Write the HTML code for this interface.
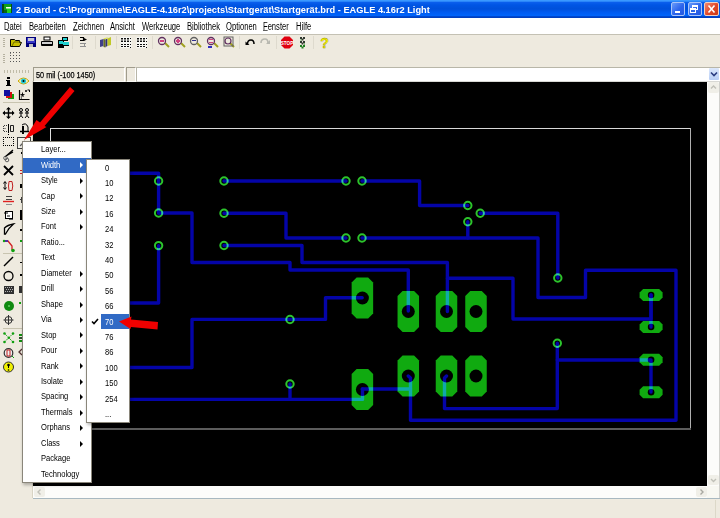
<!DOCTYPE html>
<html><head><meta charset="utf-8">
<style>
*{margin:0;padding:0;box-sizing:border-box}
html,body{width:720px;height:518px;overflow:hidden;background:#EEEADF;font-family:"Liberation Sans",sans-serif;position:relative}
.a{position:absolute}
.t{position:absolute;white-space:nowrap;transform-origin:0 0;line-height:1}
#title{left:0;top:0;width:720px;height:18px;background:linear-gradient(#3a98ff 0,#3a98ff 1px,#0a5eec 2.5px,#0055e4 5px,#0050da 9px,#005af0 12px,#0064fa 15.5px,#0048d0 16.5px,#003cb8 18px)}
#menubar{left:0;top:18px;width:720px;height:17px;background:#fff;border-bottom:1px solid #c4c1b4}
.mi{position:absolute;top:20.5px;font-size:10px;color:#000;transform:scaleX(.76);transform-origin:0 0;white-space:nowrap}
.mi u{text-decoration:underline;text-decoration-color:#606060;text-underline-offset:0px;text-decoration-thickness:1px}
#canvas{left:33px;top:82px;width:674px;height:404px;background:#000}
.menu{background:#fff;border:1px solid #8a867a}
.it{position:absolute;font-size:9px;transform:scaleX(.84);transform-origin:0 0;white-space:nowrap;color:#000}
.arr{position:absolute;width:0;height:0;border-top:3px solid transparent;border-bottom:3px solid transparent;border-left:3px solid #000}
</style></head><body>
<!-- title bar -->
<div id="title" class="a"></div>
<svg class="a" style="left:2px;top:4px" width="10" height="9"><rect width="10" height="9" fill="#10a018"/><rect x="0" y="0" width="2" height="9" fill="#084810"/><rect x="9" y="0" width="1" height="9" fill="#085010"/><rect x="2" y="6" width="3" height="3" fill="#086a10"/><rect x="5" y="3" width="4" height="6" fill="#20d020"/><rect x="4" y="3" width="5" height="1.5" fill="#f0fff0"/></svg>
<div class="t" style="left:16px;top:6px;font-size:9.3px;font-weight:bold;color:#fff;transform:scaleX(.995)">2 Board - C:\Programme\EAGLE-4.16r2\projects\Startgerät\Startgerät.brd - EAGLE 4.16r2 Light</div>
<!-- window buttons -->
<div class="a" style="left:671px;top:2px;width:14px;height:14px;border:1px solid #a8c4f8;border-radius:2px;background:linear-gradient(135deg,#6a9cfa,#2c64ec 55%,#2458e0)"></div>
<div class="a" style="left:675px;top:11px;width:5px;height:2px;background:#fff"></div>
<div class="a" style="left:688px;top:2px;width:14px;height:14px;border:1px solid #a8c4f8;border-radius:2px;background:linear-gradient(135deg,#6a9cfa,#2c64ec 55%,#2458e0)"></div>
<div class="a" style="left:692px;top:5px;width:6px;height:5px;border:1px solid #fff;border-top-width:2px"></div>
<div class="a" style="left:690px;top:7.5px;width:6px;height:5px;border:1px solid #fff;border-top-width:2px;background:#2e66e6"></div>
<div class="a" style="left:704px;top:2px;width:15px;height:14px;border:1px solid #f0d0c0;border-radius:2px;background:linear-gradient(135deg,#f08870,#e04828 55%,#c83818)"></div>
<svg class="a" style="left:704px;top:2px" width="15" height="14"><path d="M4.5 3.5 L10.5 10.5 M10.5 3.5 L4.5 10.5" stroke="#fff" stroke-width="1.6"/></svg>
<!-- menubar -->
<div id="menubar" class="a"></div>
<div class="mi" style="left:4px"><u>D</u>atei</div>
<div class="mi" style="left:29px">B<u>e</u>arbeiten</div>
<div class="mi" style="left:73px"><u>Z</u>eichnen</div>
<div class="mi" style="left:110px"><u>A</u>nsicht</div>
<div class="mi" style="left:142px"><u>W</u>erkzeuge</div>
<div class="mi" style="left:187px"><u>B</u>ibliothek</div>
<div class="mi" style="left:226px"><u>O</u>ptionen</div>
<div class="mi" style="left:263px"><u>F</u>enster</div>
<div class="mi" style="left:295.5px"><u>H</u>ilfe</div>


<!-- toolbar rows -->

<svg class="a" style="left:0;top:34px" width="340" height="32">
 <!-- grips -->
 <g fill="#b5b1a0"><rect x="3" y="4" width="2" height="1"/><rect x="3" y="6" width="2" height="1"/><rect x="3" y="8" width="2" height="1"/><rect x="3" y="10" width="2" height="1"/><rect x="3" y="12" width="2" height="1"/>
 <rect x="3" y="20" width="2" height="1"/><rect x="3" y="22" width="2" height="1"/><rect x="3" y="24" width="2" height="1"/><rect x="3" y="26" width="2" height="1"/><rect x="3" y="28" width="2" height="1"/></g>
 <!-- open folder -->
 <path d="M10.5 5.5 h4 l1 1 h4 v2 h2 l-2 4 h-9 z" fill="#c8c000" stroke="#000" stroke-width="1"/>
 <path d="M12 12 l2 -4 h7" fill="none" stroke="#6a6a00" stroke-width="1"/>
 <!-- disk -->
 <rect x="26" y="3" width="10" height="10" fill="#00007a"/>
 <rect x="27" y="4" width="8" height="5" fill="#3838c8"/>
 <rect x="28" y="4" width="6" height="3" fill="#c8c8d8"/>
 <rect x="29" y="10" width="4" height="3" fill="#c0c0c0"/>
 <!-- printer -->
 <rect x="44" y="3" width="6" height="3" fill="#fff" stroke="#000" stroke-width="1"/>
 <path d="M41.5 7.5 h11 v4 h-11 z" fill="#d0d0d0" stroke="#000"/>
 <rect x="42" y="10" width="10" height="2" fill="#000"/>
 <!-- network -->
 <rect x="62" y="3" width="6" height="4" fill="#000"/><rect x="63" y="4" width="4" height="2" fill="#20d0d0"/>
 <rect x="58" y="6" width="6" height="5" fill="#000"/><rect x="59" y="7" width="4" height="3" fill="#20d0d0"/>
 <rect x="63" y="8" width="6" height="4" fill="#20d0d0"/><rect x="58" y="11" width="6" height="3" fill="#000"/><rect x="64" y="11" width="5" height="1" fill="#000"/>
 <line x1="72.5" y1="2" x2="72.5" y2="15" stroke="#dedace"/>
 <!-- ratsnest-like -->
 <path d="M80 3.5 h4 M80 6.5 h4 M83.5 3 v4" stroke="#000" fill="none" stroke-width="1.2"/><path d="M84 4 l3 1.5 l-3 1.5z" fill="#000"/><path d="M80 9.5 h6 M80 12.5 h6 M84.5 9 v4" stroke="#909090" fill="none" stroke-width="1"/>
 <line x1="95.5" y1="2" x2="95.5" y2="15" stroke="#dedace"/>
 <!-- book -->
 <path d="M100 6 l3.5 -1 v7 l-3.5 1z" fill="#40408a"/><path d="M103.5 5 l2 0.5 v8 l-2 -0.5z" fill="#687020"/><path d="M105.5 5.5 l2 -1 v7.5 l-2 1z" fill="#30307a"/><path d="M107.5 4.5 l3.5 -1.5 v8 l-3.5 1z" fill="#c0c828"/><path d="M103 4.5 l4 -1 l2 0.5 l-4 1z" fill="#d8e040"/>
 <line x1="116.5" y1="2" x2="116.5" y2="15" stroke="#dedace"/>
 <!-- two grid icons -->
 <rect x="120.5" y="3" width="11" height="11" fill="#f8f8f4"/><rect x="136.5" y="3" width="11" height="11" fill="#f8f8f4"/>
 <g fill="#101010"><rect x="121" y="4" width="2" height="4"/><rect x="124" y="4" width="2" height="4"/><rect x="127" y="4" width="2" height="4"/><rect x="121" y="10" width="2" height="3"/><rect x="124" y="10" width="2" height="3"/><rect x="127" y="10" width="2" height="3"/><rect x="130" y="4" width="1" height="1"/><rect x="130" y="7" width="1" height="1"/><rect x="130" y="10" width="1" height="1"/><rect x="130" y="13" width="1" height="1"/>
 <rect x="137" y="4" width="2" height="4"/><rect x="140" y="4" width="2" height="4"/><rect x="143" y="4" width="2" height="4"/><rect x="137" y="10" width="2" height="3"/><rect x="140" y="10" width="2" height="3"/><rect x="143" y="10" width="2" height="3"/><rect x="146" y="4" width="1" height="1"/><rect x="146" y="7" width="1" height="1"/><rect x="146" y="10" width="1" height="1"/><rect x="146" y="13" width="1" height="1"/></g>
 <g fill="#f8f8f4"><rect x="121" y="5.5" width="8" height="1"/><rect x="137" y="5.5" width="8" height="1"/><rect x="121" y="11" width="8" height="1"/><rect x="137" y="11" width="8" height="1"/></g>
 <line x1="152.5" y1="2" x2="152.5" y2="15" stroke="#dedace"/>
 <!-- zooms -->
 <g stroke-width="2" fill="none">
 <line x1="165" y1="9" x2="169" y2="13" stroke="#a0a020"/><circle cx="162" cy="7" r="3.5" stroke="#603060" stroke-width="1.3"/>
 <line x1="181" y1="9" x2="185" y2="13" stroke="#a0a020"/><circle cx="178" cy="7" r="3.5" stroke="#603060" stroke-width="1.3"/>
 <line x1="197" y1="9" x2="201" y2="13" stroke="#a0a020"/><circle cx="194" cy="7" r="3.5" stroke="#606060" stroke-width="1.3"/>
 <line x1="214" y1="9" x2="218" y2="13" stroke="#a0a020"/><circle cx="211" cy="7" r="3.5" stroke="#603060" stroke-width="1.3"/>
 <line x1="230" y1="9" x2="234" y2="13" stroke="#a0a020"/><rect x="224" y="3" width="9" height="9" stroke="#606060" stroke-width="1"/><circle cx="228" cy="7" r="3" stroke="#603060" stroke-width="1.2"/>
 </g>
 <g fill="#d04080"><rect x="160" y="6" width="4" height="2"/><rect x="176" y="6" width="4" height="2"/><rect x="177" y="5" width="2" height="4"/><rect x="192" y="6" width="4" height="1" fill="#303090"/><rect x="209" y="5" width="4" height="1"/><rect x="209" y="8" width="4" height="1"/><rect x="208" y="12" width="4" height="2" fill="#3030c0"/></g>
 <line x1="239.5" y1="2" x2="239.5" y2="15" stroke="#dedace"/>
 <!-- undo redo -->
 <path d="M247.5 10 q0 -4 3.5 -4 q3 0 3 4" fill="none" stroke="#000" stroke-width="1.5"/><path d="M245.5 7.5 l4 3.5 h-4z" fill="#000"/>
 <path d="M261 9 q0 -4 4 -4 q3 0 3 4" fill="none" stroke="#b8b8b0" stroke-width="1.6"/><path d="M270 6 l-4 4 h4z" fill="#b8b8b0"/>
 <line x1="276.5" y1="2" x2="276.5" y2="15" stroke="#dedace"/>
 <!-- stop -->
 <path d="M284.5 2.5 h5 l3.5 3.5 v5 l-3.5 3.5 h-5 l-3.5 -3.5 v-5z" fill="#e00010"/>
 <text x="287" y="11" font-size="4.6" font-weight="bold" fill="#fff" text-anchor="middle" font-family="Liberation Sans">STOP</text>
 <!-- traffic light -->
 <g fill="#303830"><rect x="300" y="3" width="2" height="2"/><rect x="303" y="3" width="2" height="2"/><rect x="301.5" y="4.5" width="2" height="2"/><rect x="300" y="7" width="2" height="2"/><rect x="303" y="7" width="2" height="2"/><rect x="301.5" y="8.5" width="2" height="2"/></g><g fill="#208020"><rect x="300" y="11" width="2" height="2"/><rect x="303" y="11" width="2" height="2"/><rect x="301.5" y="12.5" width="2" height="2"/><rect x="300.5" y="5.5" width="1" height="1"/><rect x="304" y="9.5" width="1" height="1"/></g>
 <line x1="313.5" y1="2" x2="313.5" y2="15" stroke="#dedace"/>
 <!-- help -->
 <text x="324.5" y="14" font-size="14" font-weight="bold" fill="#f8f800" stroke="#908800" stroke-width=".4" text-anchor="middle" font-family="Liberation Sans">?</text>
 <!-- grid icon row2 -->
 <g fill="#808080"><rect x="10" y="19" width="1" height="1"/></g>
</svg>
<svg class="a" style="left:10px;top:52px" width="10" height="12">
 <g fill="#555"><rect x="0" y="0" width="1" height="1"/><rect x="3" y="0" width="1" height="1"/><rect x="6" y="0" width="1" height="1"/><rect x="9" y="0" width="1" height="1"/>
 <rect x="0" y="3" width="1" height="1"/><rect x="3" y="3" width="1" height="1"/><rect x="6" y="3" width="1" height="1"/><rect x="9" y="3" width="1" height="1"/>
 <rect x="0" y="6" width="1" height="1"/><rect x="3" y="6" width="1" height="1"/><rect x="6" y="6" width="1" height="1"/><rect x="9" y="6" width="1" height="1"/>
 <rect x="0" y="9" width="1" height="1"/><rect x="3" y="9" width="1" height="1"/><rect x="6" y="9" width="1" height="1"/><rect x="9" y="9" width="1" height="1"/></g>
</svg>
<!-- command row -->
<div class="a" style="left:33px;top:67px;width:92px;height:15px;background:#EEEADF;border-top:1px solid #a09c8c;border-left:1px solid #a09c8c;border-right:1px solid #fff;border-bottom:1px solid #f8f8f4"></div>
<div class="t" style="left:35.5px;top:70.3px;font-size:9.6px;color:#000;transform:scaleX(.76);-webkit-text-stroke:.25px #000">50 mil (-100 1450)</div>
<div class="a" style="left:126px;top:67px;width:10px;height:15px;border-top:1px solid #a09c8c;border-left:1px solid #a09c8c;border-right:1px solid #fff;border-bottom:1px solid #f8f8f4"></div>
<div class="a" style="left:136px;top:67px;width:584px;height:15px;background:#fff;border:1px solid #b8b6a8;border-right:none;border-bottom-color:#d8d8d4"></div>
<div class="a" style="left:709px;top:68px;width:10px;height:12px;background:linear-gradient(#dce8fc,#b8cef6);border-radius:1px"></div>
<svg class="a" style="left:709px;top:68px" width="10" height="12"><path d="M2 4.5 l3 3 l3 -3" stroke="#2a3c80" stroke-width="1.6" fill="none"/></svg>


<!-- left toolbar -->
<svg class="a" style="left:0;top:66px" width="33" height="320">
 <g fill="#c0bca8"><rect x="4" y="4" width="1" height="3"/><rect x="7" y="4" width="1" height="3"/><rect x="10" y="4" width="1" height="3"/><rect x="13" y="4" width="1" height="3"/><rect x="16" y="4" width="1" height="3"/><rect x="19" y="4" width="1" height="3"/><rect x="22" y="4" width="1" height="3"/><rect x="25" y="4" width="1" height="3"/><rect x="28" y="4" width="1" height="3"/></g>
 <!-- info i -->
 <rect x="7" y="11" width="3" height="2" fill="#000"/><path d="M6 14 h4 v5 h1 v1 h-5 v-1 h1 v-4 h-1z" fill="#000"/>
 <!-- eye -->
 <path d="M18 15 q5.5 -6 11 0 q-5.5 6 -11 0z" fill="#f8f0c0" stroke="#c8a800" stroke-width="1"/><circle cx="23.5" cy="15" r="2.6" fill="#20c8d8"/><circle cx="23.5" cy="15" r="1" fill="#000"/>
 <!-- layers -->
 <rect x="8" y="28" width="6" height="5" fill="#10a010"/><rect x="6" y="26" width="6" height="6" fill="#d01010"/><rect x="4" y="24" width="6" height="6" fill="#1010a0"/>
 <!-- coord -->
 <path d="M19.5 24 v9.5 h10" fill="none" stroke="#000" stroke-width="1.2"/><path d="M21 32 h1 M23 30 h1 M21 30 h1" stroke="#000"/><path d="M22.5 26.5 v4 M20.5 28.5 h4" stroke="#000" stroke-width=".9"/><path d="M25 25 h2 M26 24 v2 M27.5 24 h2 v2" stroke="#000" fill="none"/>
 <line x1="3" y1="36.5" x2="30" y2="36.5" stroke="#c8c4b0"/>
 <!-- move -->
 <path d="M8.5 42 v10 M3.5 47 h10" stroke="#000" stroke-width="1.4"/><path d="M8.5 41 l-2.5 2.5 h5z M8.5 53 l-2.5 -2.5 h5z M2.5 47 l2.5 -2.5 v5z M14.5 47 l-2.5 -2.5 v5z" fill="#000"/>
 <!-- copy -->
 <g stroke="#000" fill="none" stroke-width="1"><circle cx="21" cy="44" r="1.5"/><path d="M21 45.5 v4 M19 47 h4 M19 52 l2 -2.5 l2 2.5"/><circle cx="27" cy="44" r="1.5"/><path d="M27 45.5 v4 M25 47 h4 M25 52 l2 -2.5 l2 2.5"/></g>
 <!-- mirror -->
 <path d="M7 59.5 h-3.5 v6 h3.5 M3.5 62.5 h2.5" fill="none" stroke="#404040" stroke-dasharray="1 1"/><path d="M10.5 59.5 h3 v6 h-3z" fill="none" stroke="#202020"/><line x1="8.5" y1="58" x2="8.5" y2="67" stroke="#000"/><rect x="8" y="68" width="1" height="1" fill="#000"/>
 <!-- rotate -->
 <path d="M20 65.5 h9" stroke="#000" stroke-width="1.5"/><rect x="22" y="60" width="2" height="8" fill="#000"/><path d="M22 59 q4 -3 6 2 v4" fill="none" stroke="#000"/>
 <!-- group -->
 <g fill="#000"><rect x="3" y="71" width="1" height="1"/><rect x="3" y="79" width="1" height="1"/><rect x="5" y="71" width="1" height="1"/><rect x="5" y="79" width="1" height="1"/><rect x="7" y="71" width="1" height="1"/><rect x="7" y="79" width="1" height="1"/><rect x="9" y="71" width="1" height="1"/><rect x="9" y="79" width="1" height="1"/><rect x="11" y="71" width="1" height="1"/><rect x="11" y="79" width="1" height="1"/><rect x="13" y="71" width="1" height="1"/><rect x="13" y="79" width="1" height="1"/><rect x="3" y="73" width="1" height="1"/><rect x="13" y="73" width="1" height="1"/><rect x="3" y="75" width="1" height="1"/><rect x="13" y="75" width="1" height="1"/><rect x="3" y="77" width="1" height="1"/><rect x="13" y="77" width="1" height="1"/></g>
 <!-- change pressed -->
 <rect x="17.5" y="71.5" width="13" height="11" fill="#f4f2ea" stroke="#404040"/>
 <path d="M20 80 l5 -5" stroke="#606060" stroke-width="1.2"/>
 <!-- cut -->
 <path d="M13 84 l-8 7 M13 86 l-7 4" stroke="#000" stroke-width="1.3"/><circle cx="5.5" cy="92" r="1.8" fill="none" stroke="#606060"/><circle cx="7" cy="94" r="1.8" fill="none" stroke="#606060"/>
 <!-- delete -->
 <path d="M4 100 l9 9 M13 100 l-9 9" stroke="#000" stroke-width="1.8"/>
 <!-- split? -->
 <path d="M5 116 v7" stroke="#000"/><path d="M3.5 117.5 l1.5 -2 l1.5 2 M3.5 121.5 l1.5 2 l1.5 -2" stroke="#000" fill="none"/>
 <path d="M9 115.5 h3 M9 124.5 h3 M9 115.5 q-1 4.5 0 9 M12 115.5 q1.5 4.5 0 9" stroke="#c02020" fill="none"/>
 <!-- name value -->
 <path d="M6 130.5 h6 M6 133.5 h6" stroke="#404040" stroke-width="1"/><path d="M3 135.5 h11" stroke="#e02020" stroke-width="1.4"/><path d="M6 138.5 h6" stroke="#909090"/>
 <!-- smash -->
 <rect x="5.5" y="145.5" width="7" height="7" fill="#fff" stroke="#000"/><path d="M4 147 h4 M7 150 h3" stroke="#000"/><path d="M9 153.5 h4" stroke="#606060"/>
 <!-- miter -->
 <path d="M4.5 168 v-6 q3 -3 9 -4 q-5 4 -8 10z" fill="#f4f2ea" stroke="#000" stroke-width="1.3"/>
 <!-- split -->
 <path d="M4 175 h4 l4 5 v4" stroke="#d02020" stroke-width="1.3" fill="none"/><path d="M4 175 h4" stroke="#2020c0" stroke-width="1.4"/><circle cx="4" cy="175" r="1.2" fill="#10a010"/><circle cx="13" cy="184.5" r="1.8" fill="#10a010"/>
 <line x1="3" y1="187.5" x2="30" y2="187.5" stroke="#c8c4b0"/>
 <!-- line -->
 <path d="M4 200 l9 -9" stroke="#000" stroke-width="1.4"/>
 <!-- circle -->
 <circle cx="8.5" cy="210" r="4.5" fill="none" stroke="#000" stroke-width="1.3"/>
 <!-- rect hatched -->
 <rect x="4" y="220" width="10" height="8" fill="#303030"/><g fill="#b0b0b0"><rect x="5" y="221" width="1" height="1"/><rect x="7" y="221" width="1" height="1"/><rect x="9" y="221" width="1" height="1"/><rect x="11" y="221" width="1" height="1"/><rect x="6" y="223" width="1" height="1"/><rect x="8" y="223" width="1" height="1"/><rect x="10" y="223" width="1" height="1"/><rect x="12" y="223" width="1" height="1"/><rect x="5" y="225" width="1" height="1"/><rect x="7" y="225" width="1" height="1"/><rect x="9" y="225" width="1" height="1"/><rect x="11" y="225" width="1" height="1"/></g>
 <!-- via -->
 <circle cx="9" cy="240" r="5" fill="#108a10"/><circle cx="9" cy="240" r="0.8" fill="#a0ffa0"/>
 <!-- hole -->
 <circle cx="8.5" cy="254" r="3.5" fill="none" stroke="#303030"/><path d="M8.5 249 v10 M3.5 254 h10" stroke="#303030"/>
 <line x1="3" y1="262.5" x2="30" y2="262.5" stroke="#c8c4b0"/>
 <!-- ratsnest -->
 <path d="M4.5 267.5 l8.5 8.5 M13 267.5 l-8.5 8.5" stroke="#10a010" stroke-width="1" stroke-dasharray="1.5 1"/><g fill="#10a010"><circle cx="4.5" cy="267.5" r="1.3"/><circle cx="13" cy="267.5" r="1.3"/><circle cx="4.5" cy="276" r="1.3"/><circle cx="13" cy="276" r="1.3"/><circle cx="8.8" cy="271.8" r="1.3"/></g>
 <!-- erc -->
 <circle cx="8.5" cy="287" r="4.3" fill="#f0f0f0" stroke="#303030" stroke-width="1.2"/><path d="M7 284 h3 v6 h-3z" fill="none" stroke="#c02020"/><path d="M12 290 l2 2" stroke="#10a010"/>
 <!-- drc -->
 <circle cx="8.5" cy="301" r="5" fill="#f0f000" stroke="#303030" stroke-width="1"/><circle cx="8.5" cy="299" r="1.3" fill="#000"/><rect x="8" y="299" width="1" height="3" fill="#000"/><circle cx="8.5" cy="304" r="0.8" fill="#000"/>
 <!-- col2 partial bits -->
 <rect x="21" y="86" width="1" height="2" fill="#000"/>
 <rect x="20" y="104" width="2" height="1" fill="#d02020"/><rect x="20" y="107" width="2" height="1" fill="#d02020"/>
 <rect x="20" y="118" width="2" height="4" fill="#000"/>
 <rect x="20" y="133" width="2" height="1" fill="#404040"/><rect x="21" y="131" width="1" height="6" fill="#404040"/>
 <rect x="20" y="144" width="2" height="10" fill="#000"/>
 <rect x="20" y="163" width="2" height="2" fill="#000"/>
 <rect x="20" y="174" width="2" height="2" fill="#10a010"/>
 <rect x="20" y="196" width="2" height="1" fill="#000"/>
 <rect x="20" y="208" width="2" height="2" fill="#000"/>
 <rect x="19" y="220" width="3" height="7" fill="#303030"/>
 <rect x="19" y="236" width="2" height="2" fill="#10a010"/>
 <rect x="19" y="268" width="3" height="2" fill="#109010"/><rect x="19" y="271" width="3" height="2" fill="#305030"/><rect x="19" y="274" width="3" height="2" fill="#109010"/>
 <path d="M22 283 l-3 3 l3 3" stroke="#503030" stroke-width="1.3" fill="none"/>
</svg>
<!-- canvas border -->
<div class="a" style="left:32px;top:81px;width:1px;height:417px;background:#d8d4c4"></div>

<!-- canvas -->
<div id="canvas" class="a"></div>
<!-- pcb -->
<svg class="a" style="left:33px;top:82px;isolation:isolate" width="674" height="404" viewBox="33 82 674 404">
<rect x="33" y="82" width="674" height="404" fill="#000"/>
<rect x="50" y="128" width="641" height="1" fill="#d8d8d8"/><rect x="50" y="128" width="1" height="301" fill="#e0e0e0"/><rect x="690" y="128" width="1" height="301" fill="#b0b0b0"/><rect x="50" y="428" width="641" height="2" fill="#5c5c5c"/>
<path d="M356.65,277.5 H368.15 L373.15,282.5 V313.5 L368.15,318.5 H356.65 L351.65,313.5 V282.5 Z" fill="#10aa10"/><circle cx="362.4" cy="298" r="6.5" fill="#000"/>
<path d="M402.55,291.0 H414.05 L419.05,296.0 V327.0 L414.05,332.0 H402.55 L397.55,327.0 V296.0 Z" fill="#10aa10"/><circle cx="408.3" cy="311.5" r="6.5" fill="#000"/>
<path d="M440.75,291.0 H452.25 L457.25,296.0 V327.0 L452.25,332.0 H440.75 L435.75,327.0 V296.0 Z" fill="#10aa10"/><circle cx="446.5" cy="311.5" r="6.5" fill="#000"/>
<path d="M470.25,291.0 H481.75 L486.75,296.0 V327.0 L481.75,332.0 H470.25 L465.25,327.0 V296.0 Z" fill="#10aa10"/><circle cx="476" cy="311.5" r="6.5" fill="#000"/>
<path d="M356.65,369.0 H368.15 L373.15,374.0 V405.0 L368.15,410.0 H356.65 L351.65,405.0 V374.0 Z" fill="#10aa10"/><circle cx="362.4" cy="389.5" r="6.5" fill="#000"/>
<path d="M402.55,355.5 H414.05 L419.05,360.5 V391.5 L414.05,396.5 H402.55 L397.55,391.5 V360.5 Z" fill="#10aa10"/><circle cx="408.3" cy="376" r="6.5" fill="#000"/>
<path d="M440.75,355.5 H452.25 L457.25,360.5 V391.5 L452.25,396.5 H440.75 L435.75,391.5 V360.5 Z" fill="#10aa10"/><circle cx="446.5" cy="376" r="6.5" fill="#000"/>
<path d="M470.25,355.5 H481.75 L486.75,360.5 V391.5 L481.75,396.5 H470.25 L465.25,391.5 V360.5 Z" fill="#10aa10"/><circle cx="476" cy="376" r="6.5" fill="#000"/>
<path d="M643.1,289.0 H659.1 L662.6,292.5 V297.5 L659.1,301.0 H643.1 L639.6,297.5 V292.5 Z" fill="#10aa10"/><circle cx="651.1" cy="295" r="3.3" fill="#000"/>
<path d="M643.1,321.0 H659.1 L662.6,324.5 V329.5 L659.1,333.0 H643.1 L639.6,329.5 V324.5 Z" fill="#10aa10"/><circle cx="651.1" cy="327" r="3.3" fill="#000"/>
<path d="M643.1,353.8 H659.1 L662.6,357.3 V362.3 L659.1,365.8 H643.1 L639.6,362.3 V357.3 Z" fill="#10aa10"/><circle cx="651.1" cy="359.8" r="3.3" fill="#000"/>
<path d="M643.1,386.2 H659.1 L662.6,389.7 V394.7 L659.1,398.2 H643.1 L639.6,394.7 V389.7 Z" fill="#10aa10"/><circle cx="651.1" cy="392.2" r="3.3" fill="#000"/>
<g fill="none" stroke="#0404a8" stroke-width="3.4" stroke-linejoin="round" stroke-linecap="round" style="mix-blend-mode:lighten">
<polyline points="60,173.2 158.6,173.2 158.6,213"/>
<polyline points="158.6,213 192,213 192,262.5 290,262.5 290,270 408.3,270 408.3,311"/>
<polyline points="158.6,245.6 158.6,303 60,303"/>
<polyline points="224,181 346,181"/>
<polyline points="362,181 419.6,181 419.6,205.5 467.8,205.5"/>
<polyline points="224,213.3 286,213.3 286,238 346,238"/>
<polyline points="362,238 538,238 538,297.5 585.5,297.5 585.5,270.3 676,270.3 676,420.3 410.5,420.3 410.5,378 408.3,376"/>
<polyline points="224,245.5 302,245.5 302,262.5 447.4,262.5 447.4,311.5"/>
<polyline points="480.2,213.3 557.8,213.3 557.8,278"/>
<polyline points="467.8,221.8 467.8,238"/>
<polyline points="447.4,278.3 513,278.3 513,319 651,319 651,295"/>
<polyline points="651,295 651,327"/>
<polyline points="60,367.5 192,367.5 192,319.4 325.5,319.4 325.5,297.8 362.2,297.8"/>
<polyline points="290,384 290,399.4"/>
<polyline points="60,399.4 362.5,399.4 362.5,389"/>
<polyline points="362.2,389 410.5,389"/>
<polyline points="446.5,376 444.5,378 444.5,408.6 557.3,408.6 557.3,343.3"/>
<polyline points="557.3,360 651,360 651,392"/>
</g>
<g style="mix-blend-mode:lighten">
<circle cx="158.6" cy="181" r="3.7" fill="none" stroke="#2cc42c" stroke-width="2"/>
<circle cx="158.6" cy="213" r="3.7" fill="none" stroke="#2cc42c" stroke-width="2"/>
<circle cx="158.6" cy="245.6" r="3.7" fill="none" stroke="#2cc42c" stroke-width="2"/>
<circle cx="224" cy="181" r="3.7" fill="none" stroke="#2cc42c" stroke-width="2"/>
<circle cx="224" cy="213.3" r="3.7" fill="none" stroke="#2cc42c" stroke-width="2"/>
<circle cx="224" cy="245.5" r="3.7" fill="none" stroke="#2cc42c" stroke-width="2"/>
<circle cx="346" cy="181" r="3.7" fill="none" stroke="#2cc42c" stroke-width="2"/>
<circle cx="362" cy="181" r="3.7" fill="none" stroke="#2cc42c" stroke-width="2"/>
<circle cx="346" cy="238" r="3.7" fill="none" stroke="#2cc42c" stroke-width="2"/>
<circle cx="362" cy="238" r="3.7" fill="none" stroke="#2cc42c" stroke-width="2"/>
<circle cx="467.8" cy="205.5" r="3.7" fill="none" stroke="#2cc42c" stroke-width="2"/>
<circle cx="480.2" cy="213.3" r="3.7" fill="none" stroke="#2cc42c" stroke-width="2"/>
<circle cx="467.8" cy="221.8" r="3.7" fill="none" stroke="#2cc42c" stroke-width="2"/>
<circle cx="557.8" cy="278" r="3.7" fill="none" stroke="#2cc42c" stroke-width="2"/>
<circle cx="290" cy="319.5" r="3.7" fill="none" stroke="#2cc42c" stroke-width="2"/>
<circle cx="290" cy="384" r="3.7" fill="none" stroke="#2cc42c" stroke-width="2"/>
<circle cx="557.3" cy="343.3" r="3.7" fill="none" stroke="#2cc42c" stroke-width="2"/>
</g></svg>
<!-- /pcb -->


<!-- vertical scrollbar -->
<div class="a" style="left:707px;top:82px;width:13px;height:404px;background:#fcfcfa"></div>
<div class="a" style="left:708px;top:82px;width:11px;height:11px;background:#f0efe8;border-radius:2px"></div>
<svg class="a" style="left:708px;top:82px" width="11" height="11"><path d="M3 6.5 l2.5 -2.5 l2.5 2.5" stroke="#c0c0b8" stroke-width="1.4" fill="none"/></svg>
<div class="a" style="left:708px;top:475px;width:11px;height:10px;background:#f0efe8;border-radius:2px"></div>
<svg class="a" style="left:708px;top:475px" width="11" height="10"><path d="M3 4 l2.5 2.5 l2.5 -2.5" stroke="#c0c0b8" stroke-width="1.4" fill="none"/></svg>
<!-- horizontal scrollbar -->
<div class="a" style="left:33px;top:486px;width:674px;height:12px;background:#fcfcfa"></div>
<div class="a" style="left:34px;top:487px;width:11px;height:10px;background:#f0efe8;border-radius:2px"></div>
<svg class="a" style="left:34px;top:487px" width="11" height="10"><path d="M6.5 2.5 l-2.5 2.5 l2.5 2.5" stroke="#c0c0b8" stroke-width="1.4" fill="none"/></svg>
<div class="a" style="left:696px;top:487px;width:11px;height:10px;background:#f0efe8;border-radius:2px"></div>
<svg class="a" style="left:696px;top:487px" width="11" height="10"><path d="M4.5 2.5 l2.5 2.5 l-2.5 2.5" stroke="#a8a8a0" stroke-width="1.4" fill="none"/></svg>
<div class="a" style="left:707px;top:486px;width:13px;height:12px;background:#f8f8f2"></div>
<div class="a" style="left:33px;top:498px;width:687px;height:1px;background:#a8b8c0"></div><div class="a" style="left:719px;top:82px;width:1px;height:416px;background:#d0d0cc"></div>
<!-- status bar -->

<div class="a" style="left:715px;top:500px;width:1px;height:18px;background:#dcd8c8"></div>

<!-- menus -->
<div class="a menu" style="left:22px;top:141px;width:69.5px;height:342px;box-shadow:1px 2px 3px rgba(0,0,0,.28)"></div>
<div class="it" style="left:41px;top:144.20px;color:#000">Layer...</div>
<div class="a" style="left:23px;top:157.95px;width:67.5px;height:15px;background:#316ac5"></div>
<div class="it" style="left:41px;top:159.65px;color:#fff">Width</div>
<div class="arr" style="left:80px;top:162.45px;border-left-color:#fff;border-top-width:3.5px;border-bottom-width:3.5px;border-left-width:3.5px"></div>
<div class="it" style="left:41px;top:175.10px;color:#000">Style</div>
<div class="arr" style="left:80px;top:177.90px;border-left-color:#000;border-top-width:3.5px;border-bottom-width:3.5px;border-left-width:3.5px"></div>
<div class="it" style="left:41px;top:190.55px;color:#000">Cap</div>
<div class="arr" style="left:80px;top:193.35px;border-left-color:#000;border-top-width:3.5px;border-bottom-width:3.5px;border-left-width:3.5px"></div>
<div class="it" style="left:41px;top:206.00px;color:#000">Size</div>
<div class="arr" style="left:80px;top:208.80px;border-left-color:#000;border-top-width:3.5px;border-bottom-width:3.5px;border-left-width:3.5px"></div>
<div class="it" style="left:41px;top:221.45px;color:#000">Font</div>
<div class="arr" style="left:80px;top:224.25px;border-left-color:#000;border-top-width:3.5px;border-bottom-width:3.5px;border-left-width:3.5px"></div>
<div class="it" style="left:41px;top:236.90px;color:#000">Ratio...</div>
<div class="it" style="left:41px;top:252.35px;color:#000">Text</div>
<div class="it" style="left:41px;top:267.80px;color:#000">Diameter</div>
<div class="arr" style="left:80px;top:270.60px;border-left-color:#000;border-top-width:3.5px;border-bottom-width:3.5px;border-left-width:3.5px"></div>
<div class="it" style="left:41px;top:283.25px;color:#000">Drill</div>
<div class="arr" style="left:80px;top:286.05px;border-left-color:#000;border-top-width:3.5px;border-bottom-width:3.5px;border-left-width:3.5px"></div>
<div class="it" style="left:41px;top:298.70px;color:#000">Shape</div>
<div class="arr" style="left:80px;top:301.50px;border-left-color:#000;border-top-width:3.5px;border-bottom-width:3.5px;border-left-width:3.5px"></div>
<div class="it" style="left:41px;top:314.15px;color:#000">Via</div>
<div class="arr" style="left:80px;top:316.95px;border-left-color:#000;border-top-width:3.5px;border-bottom-width:3.5px;border-left-width:3.5px"></div>
<div class="it" style="left:41px;top:329.60px;color:#000">Stop</div>
<div class="arr" style="left:80px;top:332.40px;border-left-color:#000;border-top-width:3.5px;border-bottom-width:3.5px;border-left-width:3.5px"></div>
<div class="it" style="left:41px;top:345.05px;color:#000">Pour</div>
<div class="arr" style="left:80px;top:347.85px;border-left-color:#000;border-top-width:3.5px;border-bottom-width:3.5px;border-left-width:3.5px"></div>
<div class="it" style="left:41px;top:360.50px;color:#000">Rank</div>
<div class="arr" style="left:80px;top:363.30px;border-left-color:#000;border-top-width:3.5px;border-bottom-width:3.5px;border-left-width:3.5px"></div>
<div class="it" style="left:41px;top:375.95px;color:#000">Isolate</div>
<div class="arr" style="left:80px;top:378.75px;border-left-color:#000;border-top-width:3.5px;border-bottom-width:3.5px;border-left-width:3.5px"></div>
<div class="it" style="left:41px;top:391.40px;color:#000">Spacing</div>
<div class="arr" style="left:80px;top:394.20px;border-left-color:#000;border-top-width:3.5px;border-bottom-width:3.5px;border-left-width:3.5px"></div>
<div class="it" style="left:41px;top:406.85px;color:#000">Thermals</div>
<div class="arr" style="left:80px;top:409.65px;border-left-color:#000;border-top-width:3.5px;border-bottom-width:3.5px;border-left-width:3.5px"></div>
<div class="it" style="left:41px;top:422.30px;color:#000">Orphans</div>
<div class="arr" style="left:80px;top:425.10px;border-left-color:#000;border-top-width:3.5px;border-bottom-width:3.5px;border-left-width:3.5px"></div>
<div class="it" style="left:41px;top:437.75px;color:#000">Class</div>
<div class="arr" style="left:80px;top:440.55px;border-left-color:#000;border-top-width:3.5px;border-bottom-width:3.5px;border-left-width:3.5px"></div>
<div class="it" style="left:41px;top:453.20px;color:#000">Package</div>
<div class="it" style="left:41px;top:468.65px;color:#000">Technology</div>
<div class="a menu" style="left:86px;top:159px;width:43.5px;height:264px;box-shadow:1px 2px 3px rgba(0,0,0,.28)"></div>
<div class="it" style="left:105px;top:162.50px;color:#000">0</div>
<div class="it" style="left:105px;top:177.90px;color:#000">10</div>
<div class="it" style="left:105px;top:193.30px;color:#000">12</div>
<div class="it" style="left:105px;top:208.70px;color:#000">16</div>
<div class="it" style="left:105px;top:224.10px;color:#000">24</div>
<div class="it" style="left:105px;top:239.50px;color:#000">32</div>
<div class="it" style="left:105px;top:254.90px;color:#000">40</div>
<div class="it" style="left:105px;top:270.30px;color:#000">50</div>
<div class="it" style="left:105px;top:285.70px;color:#000">56</div>
<div class="it" style="left:105px;top:301.10px;color:#000">66</div>
<div class="a" style="left:101px;top:313.50px;width:27.5px;height:15px;background:#316ac5"></div>
<svg class="a" style="left:90px;top:317px" width="10" height="10"><path d="M2 4.5 l2 2 l4 -4.5" stroke="#000" stroke-width="1.6" fill="none"/></svg>
<div class="it" style="left:105px;top:316.50px;color:#fff">70</div>
<div class="it" style="left:105px;top:331.90px;color:#000">76</div>
<div class="it" style="left:105px;top:347.30px;color:#000">86</div>
<div class="it" style="left:105px;top:362.70px;color:#000">100</div>
<div class="it" style="left:105px;top:378.10px;color:#000">150</div>
<div class="it" style="left:105px;top:393.50px;color:#000">254</div>
<div class="it" style="left:105px;top:408.90px;color:#000">...</div>
<svg class="a" style="left:0;top:0" width="720" height="518">
<path d="M24 140 L36.5 120 L40 122.5 L70 87 L74.5 91 L44.5 126 L46.5 127 Z" fill="#f00000"/>
<path d="M119 321.5 L131.5 316.5 L131 319.5 L158 322 L157.5 329.5 L131 327 L130.5 329 Z" fill="#f00000"/>
</svg>
<!-- /menus -->
</body></html>
